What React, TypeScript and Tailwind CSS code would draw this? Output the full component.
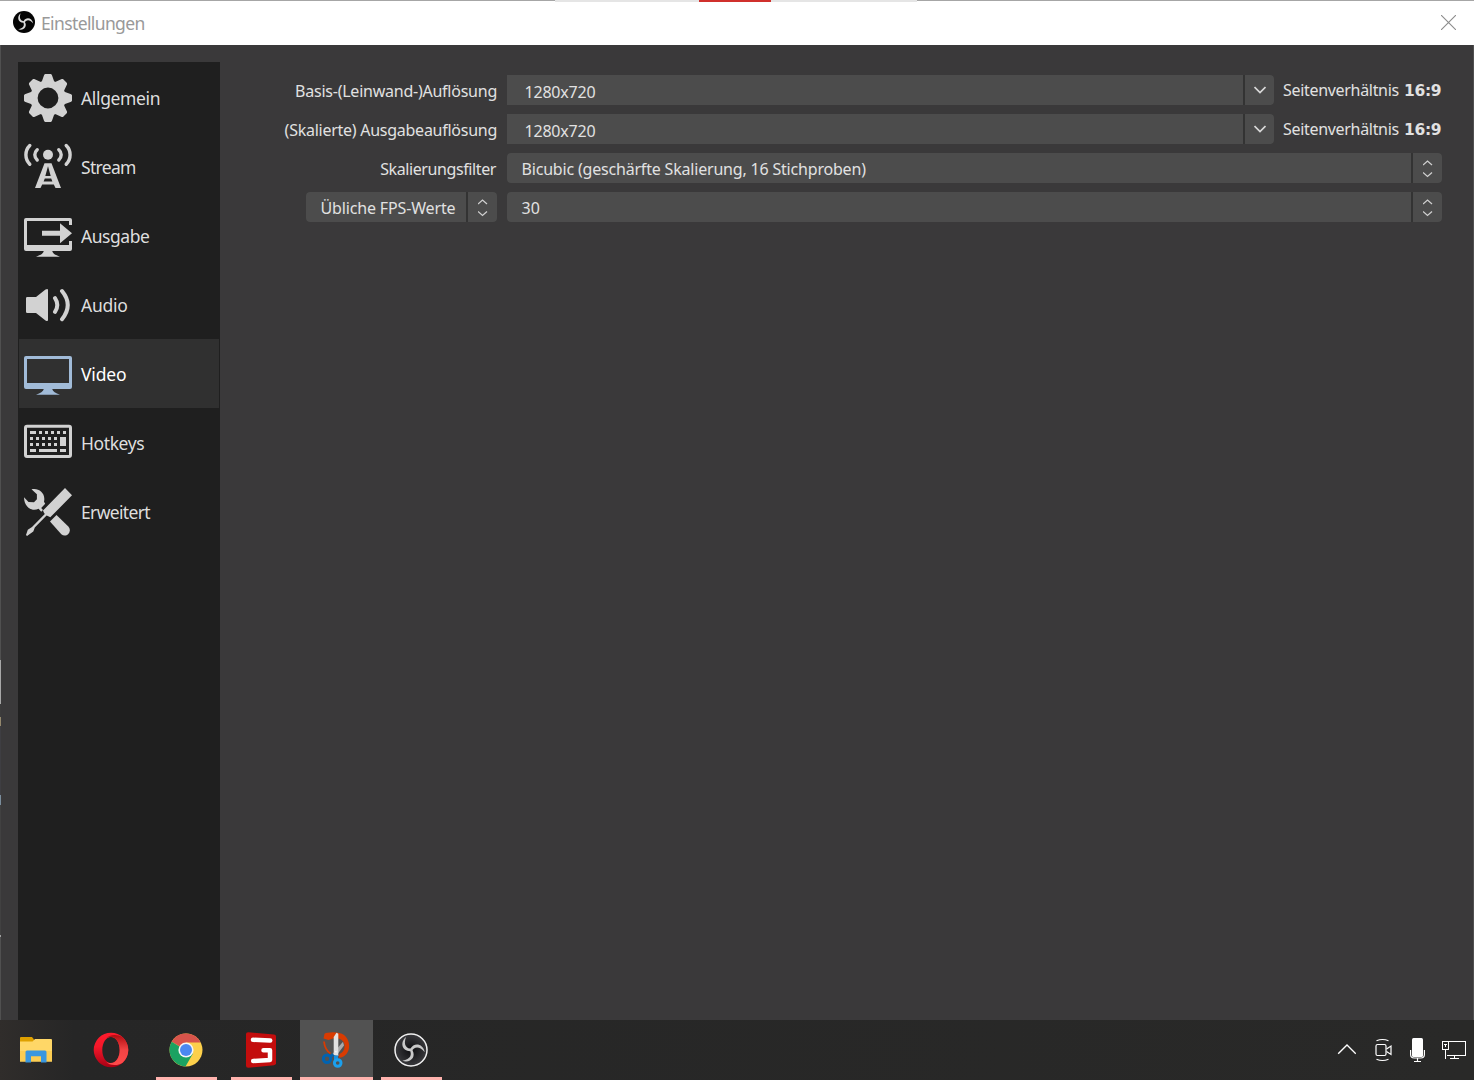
import React from "react";

const fg = "#d2d2d2";

function ObsSwirl({ color }: { color: string }) {
  const arm = "M-1.300 0C1 4 .2 8.800-8.300 10.300C-.5 13 5.200 6.500 1.300 0z";
  return (
    <g fill={color}>
      <path d={arm} />
      <path d={arm} transform="rotate(120)" />
      <path d={arm} transform="rotate(240)" />
    </g>
  );
}

function Icon({ children }: { children: React.ReactNode }) {
  return (
    <svg className="block h-12 w-12 shrink-0" viewBox="0 0 48 48" fill={fg}>
      {children}
    </svg>
  );
}

const gear = (
  <Icon>
    {[0, 45, 90, 135, 180, 225, 270, 315].map((a) => (
      <path key={a} d="M21.2 0h5.6l1 .8 2.2 6.2 2 3H16l2-3L20.200 .8z" transform={`rotate(${a} 24 24)`} />
    ))}
    <circle cx="24" cy="24" r="14" fill="none" stroke={fg} strokeWidth="7.200" />
  </Icon>
);

const stream = (
  <Icon>
    <circle cx="24" cy="11.800" r="5" />
    <g fill="none" stroke={fg} strokeWidth="3.400" strokeLinecap="round">
      <path d="M5.800 2.500C.6 7.500.6 16 5.800 21.200M42.200 2.500C47.400 7.500 47.400 16 42.200 21.200" />
      <path d="M13.200 6.700C10 9.500 10 14 13.200 17M34.800 6.700C38 9.500 38 14 34.800 17" />
    </g>
    <path
      fillRule="evenodd"
      d="M20.500 20.300h7L37 45h-5.500l-1.700-3.500H18.200L16.500 45H11zM24 23.300L21.300 33h5.400zM20.800 35.500L19.600 38.500H28.400L27.200 35.500z"
    />
  </Icon>
);

const outputIcon = (
  <Icon>
    <path d="M2 6h44a2 2 0 0 1 2 2v5h-3V9H3v24h42v-4h3v8a2 2 0 0 1-2 2H28.200c.6 2.800 3.300 4 7.800 5.700H12c4.500-1.700 7.200-2.900 7.800-5.700H2a2 2 0 0 1-2-2V8a2 2 0 0 1 2-2z" />
    <path d="M18 18.700h18v-7.500l12 10-12 10v-7.500H18z" />
  </Icon>
);

const audio = (
  <Icon>
    <path d="M3.300 16H12l9.500-7.500q2.500-1.300 2.500.5v30q0 1.800-2.500.500L12 32H3.300Q2 32 2 30.700V17.300Q2 16 3.300 16z" />
    <g fill="none" stroke={fg} strokeWidth="4" strokeLinecap="round">
      <path d="M31 17.200Q35.600 24 31 30.800M38 10Q49.500 24 38 38.200" />
    </g>
  </Icon>
);

const video = (
  <Icon>
    <path
      fill="#a1bbd8"
      fillRule="evenodd"
      d="M2 6h44a2 2 0 0 1 2 2v29a2 2 0 0 1-2 2H28.200c.6 2.800 3.300 4 7.800 5.700H12c4.500-1.700 7.200-2.900 7.800-5.700H2a2 2 0 0 1-2-2V8a2 2 0 0 1 2-2zM3 9v24h42V9z"
    />
  </Icon>
);

const hotkeys = (
  <Icon>
    <rect x="1.500" y="7.200" width="45" height="30.300" rx="1.500" fill="none" stroke={fg} strokeWidth="3" />
    <path d="M6 12h6v3H6zM15 12h3v3h-3zM21 12h3v3h-3zM27 12h3v3h-3zM33 12h3v3h-3zM39 12h3v3h-3z" />
    <path d="M6 18h3v3H6zM12 18h3v3h-3zM18 18h3v3h-3zM24 18h3v3h-3zM30 18h3v3h-3zM36 18h6v9h-6z" />
    <path d="M6 24h3v3H6zM12 24h3v3h-3zM18 24h3v3h-3zM24 24h3v3h-3zM30 24h3v3h-3z" />
    <path d="M6 30h6v3H6zM15 30h18v3H15zM36 30h6v3h-6z" />
  </Icon>
);

const advanced = (
  <Icon>
    <path d="M41 0l7 7.300-21.700 22-2.500-1.300-1.200-.6-11.800 12.100-1.500 4L3 48l-1-1L3.800 41.700 8 39 20.800 26l-1-1.500-.8-2z" />
    <path d="M26 33.500l6.500-6.500 11.800 11.500c4.500 5-2 12-7 7.800z" />
    <path d="M7.500 1.300C14.500-.5 22 5 20 13.700l1.200 2-4 4.300 1.800 2-1.800 1.800-2.600-3.100C8.500 24 .2 19.800 0 9.300l4.500 4.700 5.500.2 2.900-3V6.200z" />
  </Icon>
);

const items = [
  { label: "Allgemein", icon: gear, ls: "tracking-[-0.36px]" },
  { label: "Stream", icon: stream, ls: "tracking-[-0.68px]" },
  { label: "Ausgabe", icon: outputIcon, ls: "tracking-[-0.45px]" },
  { label: "Audio", icon: audio, ls: "tracking-[-0.25px]" },
  { label: "Video", icon: video, ls: "tracking-[-0.15px]" },
  { label: "Hotkeys", icon: hotkeys, ls: "tracking-[-0.4px]" },
  { label: "Erweitert", icon: advanced, ls: "tracking-[-0.66px]" },
];

function Sidebar() {
  return (
    <nav className="w-[202px] shrink-0 bg-[#1f1f1f] px-px pt-px">
      {items.map((it) => (
        <div
          key={it.label}
          className={`flex h-[69px] items-start pl-[5px] pt-[11px] text-[17.5px] ${
            it.label === "Video" ? "bg-[#303030] text-white" : "text-[#dedede]"
          }`}
        >
          {it.icon}
          <span className={`ml-[9px] leading-[48px] ${it.ls}`}>{it.label}</span>
        </div>
      ))}
    </nav>
  );
}

function DownButton() {
  return (
    <div className="flex w-[29px] shrink-0 items-center justify-center rounded-r-[4px] bg-[#4c4c4c]">
      <svg className="h-2 w-3" viewBox="0 0 12 8" fill="none" stroke="#d8d8d8" strokeWidth="1.700">
        <path d="M.5 1L6 6.500 11.500 1" />
      </svg>
    </div>
  );
}

function SpinButton() {
  return (
    <div className="flex w-[29px] shrink-0 items-center justify-center rounded-r-[4px] bg-[#4c4c4c]">
      <svg className="mt-[1px] h-[18px] w-[10px]" viewBox="0 0 10 18" fill="none" stroke="#d0d0d0" strokeWidth="1.300">
        <path d="M0 5L4.500 1 9 5M0 12.500L4.500 16.500 9 12.500" />
      </svg>
    </div>
  );
}

const split = "flex h-[30px] gap-[2px] bg-[#333333] rounded-r-[4px]";

function EditableCombo({ value }: { value: string }) {
  return (
    <div className={`${split} w-[767px]`}>
      <div className="flex-1 bg-[#4c4c4c] pl-[17.5px] leading-[34px] tracking-[-0.2px]">{value}</div>
      <DownButton />
    </div>
  );
}

function Combo({ value, width, ls }: { value: string; width: string; ls: string }) {
  return (
    <div className={`${split} rounded-l-[4px] ${width}`}>
      <div className={`flex-1 whitespace-nowrap rounded-l-[4px] bg-[#4c4c4c] pl-[14.5px] leading-[32px] ${ls}`}>{value}</div>
      <SpinButton />
    </div>
  );
}

function Ratio() {
  return (
    <div className="ml-[9px] flex whitespace-nowrap leading-[30px]">
      <span className="w-[121px] tracking-[-0.31px]">Seitenverhältnis</span>
      <b className="pt-px font-['DejaVu_Sans',sans-serif] text-[15.5px] tracking-[-0.3px]">16:9</b>
    </div>
  );
}

function Row({ label, ls, children }: { label: string; ls: string; children: React.ReactNode }) {
  return (
    <div className="flex h-[30px]">
      <div className={`mr-[10px] w-[277px] whitespace-nowrap text-right leading-[32px] ${ls}`}>{label}</div>
      {children}
    </div>
  );
}

function Form() {
  return (
    <main className="flex flex-1 flex-col gap-[9px] pt-[13px] text-[16px] text-[#e1e1e1]">
      <Row label="Basis-(Leinwand-)Auflösung" ls="tracking-[-0.24px]">
        <EditableCombo value="1280x720" />
        <Ratio />
      </Row>
      <Row label="(Skalierte) Ausgabeauflösung" ls="tracking-[-0.26px]">
        <EditableCombo value="1280x720" />
        <Ratio />
      </Row>
      <Row label="Skalierungsfilter" ls="tracking-[-0.4px] pr-px">
        <Combo value="Bicubic (geschärfte Skalierung, 16 Stichproben)" width="w-[935px]" ls="tracking-[-0.19px]" />
      </Row>
      <div className="flex pl-[86px]">
        <Combo value="Übliche FPS-Werte" width="w-[191px]" ls="tracking-[-0.15px]" />
        <div className="w-[10px]" />
        <Combo value="30" width="w-[935px]" ls="tracking-[0px]" />
      </div>
    </main>
  );
}

function TitleBar() {
  return (
    <header className="h-[45px] bg-white">
      <div className="flex h-[2px] items-start">
        <div className="h-px w-[555px] bg-[#a6a6a6]" />
        <div className="h-[2px] w-[144px] bg-[#e5e5e5]" />
        <div className="h-[2px] w-[72px] bg-[#d0302c]" />
        <div className="h-[2px] w-[146px] bg-[#e5e5e5]" />
        <div className="h-px flex-1 bg-[#a6a6a6]" />
      </div>
      <div className="flex h-[43px] items-start">
        <svg className="ml-[13px] mt-[9px] h-[22px] w-[22px]" viewBox="-18 -18 36 36">
          <circle r="18" fill="#050505" />
          <g transform="scale(1.150)">
            <ObsSwirl color="#dcdcdc" />
          </g>
        </svg>
        <h1 className="ml-[6px] text-[17.5px] leading-[43px] tracking-[-0.62px] text-[#999999]">Einstellungen</h1>
        <svg className="ml-auto mr-[18px] mt-[13px] h-[15px] w-[15px]" viewBox="0 0 15 15" stroke="#8c8c8c" strokeWidth="1.100">
          <path d="M0 0L15 15M15 0L0 15" />
        </svg>
      </div>
    </header>
  );
}

const explorer = (
  <svg className="h-9 w-9" viewBox="0 -1 36 36">
    <path d="M2 5q0-1 1-1h11l2 2.500V9H2z" fill="#dea000" />
    <path d="M2 8.500h12.500L17 6h16q1 0 1 1v21.500H2z" fill="#ffd767" />
    <path d="M2 18h32v10.500H2z" fill="#fccd52" />
    <path d="M7.500 29.500V19q0-1.500 1.500-1.500h18q1.500 0 1.500 1.500v10.500h-5.500V23.300H13v6.200z" fill="#3a97df" />
  </svg>
);

const opera = (
  <svg className="h-9 w-9" viewBox="0 0 36 36">
    <defs>
      <linearGradient id="operaL" x1="0" y1="0" x2="0" y2="1">
        <stop offset="0" stopColor="#ff1b2d" />
        <stop offset=".4" stopColor="#f5182a" />
        <stop offset="1" stopColor="#a70014" />
      </linearGradient>
      <linearGradient id="operaR" x1="0" y1="0" x2="0" y2="1">
        <stop offset="0" stopColor="#b00c10" />
        <stop offset=".5" stopColor="#f04444" />
        <stop offset="1" stopColor="#ff4b4b" />
      </linearGradient>
    </defs>
    <path fillRule="evenodd" fill="url(#operaL)" d="M18 .7a17.300 17.300 0 1 0 0 34.600A17.300 17.300 0 1 0 18 .7zM18 5c5 0 8.700 5.800 8.700 13S23 31 18 31 9.300 25.200 9.300 18 13 5 18 5z" />
    <path
      fill="url(#operaR)"
      d="M13 6.500C16 2.500 24 1.500 29.600 5.200A17.300 17.300 0 0 1 29.600 30.800C24 34.500 16 33.500 13 29.500C14.500 30.500 16 31 18 31c5 0 8.700-5.800 8.700-13S23 5 18 5c-2 0-3.500.5-5 1.500z"
    />
  </svg>
);

const chrome = (
  <svg className="h-9 w-9" viewBox="0 0 36 36">
    <circle cx="18" cy="18" r="16.500" fill="#fdd04b" />
    <path d="M18 18L3.700 9.700A16.500 16.500 0 0 1 32.600 10.500H18z" fill="#d8544b" />
    <path d="M18 18L10.700 14 3.700 9.700A16.500 16.500 0 0 0 17.500 34.500L25 21.500z" fill="#1ba261" />
    <circle cx="18" cy="18" r="7.600" fill="#f5f5f5" />
    <circle cx="18" cy="18" r="6" fill="#4a88f0" />
  </svg>
);

const redApp = (
  <svg className="h-9 w-9" viewBox="0 0 36 36">
    <path d="M5.500.2L31 2.500q2 .2 2 2v26.700q0 1.700-2 2L5.500 35.800Q3 36 3 33.700V2Q3 0 5.500.2z" fill="#c30d0d" />
    <path d="M10 7.800L27.200 8.600M20.500 18.200H27V28L10.200 29" stroke="#fff" strokeWidth="4.500" fill="none" strokeLinecap="round" strokeLinejoin="round" />
  </svg>
);

const snip = (
  <svg className="h-9 w-9" viewBox="-.5 0 36 36">
    <path d="M12 21.500C6.500 18 5.800 12.500 5.500 9.500" fill="none" stroke="#d83b01" strokeWidth="1.800" />
    <path d="M6 1.800Q9-.2 18 .4C27 .8 31.500 8 30.500 16c-1 6.500-6 10-10.500 9.500l1-3.500c3.500-1.500 5.500-5 5-9C25.500 8 20 5.500 16 6L10 8 5 6.500z" fill="#d83b01" />
    <path d="M24.500 9.800l1 3.800L18 23.500l-4.500-1z" fill="#a9a9a9" />
    <path d="M15.200 5L18 .8l1.800 1V24l-4.600-1z" fill="#e2e2e2" />
    <g fill="none" strokeWidth="3">
      <path d="M15 22.500L12 24.500" stroke="#0063b1" />
      <circle cx="8.500" cy="26.800" r="3.700" stroke="#0063b1" />
      <path d="M17.500 23.500v5" stroke="#1890e0" strokeWidth="4" />
      <circle cx="19.200" cy="31" r="3.300" stroke="#1ba0ee" />
    </g>
    <circle cx="17.400" cy="19.700" r=".8" fill="#fff" />
  </svg>
);

const obs = (
  <svg className="h-9 w-9" viewBox="-18 -18 36 36">
    <defs>
      <radialGradient id="obsFill">
        <stop offset="0" stopColor="#0d0d10" />
        <stop offset="1" stopColor="#39393c" />
      </radialGradient>
    </defs>
    <circle r="16" fill="url(#obsFill)" stroke="#f0f0f0" strokeWidth="1.500" />
    <g transform="scale(1.050)">
      <ObsSwirl color="#c9c9c9" />
    </g>
  </svg>
);

const tasks = [
  { id: "explorer", icon: explorer, state: "idle" },
  { id: "opera", icon: opera, state: "idle" },
  { id: "chrome", icon: chrome, state: "open" },
  { id: "red", icon: redApp, state: "open" },
  { id: "snip", icon: snip, state: "active" },
  { id: "obs", icon: obs, state: "open" },
];

function Taskbar() {
  return (
    <footer className="flex h-[60px] justify-between bg-[#272727] bg-linear-to-r from-[#302d2b] from-0% via-[#262626] via-5% to-[#292928]">
      <div className="flex gap-[2px]">
        {tasks.map((t) => (
          <div key={t.id} className={`flex w-[73px] flex-col items-center justify-between ${t.state === "active" ? "bg-[#525252]" : ""}`}>
            <div className="flex h-[57px] items-center pr-px pt-[2px]">{t.icon}</div>
            <div className={`h-[3px] ${t.state === "active" ? "w-full bg-[#ffb3ae]" : t.state === "open" ? "w-[61px] bg-[#ffb3ae]" : "w-0"}`} />
          </div>
        ))}
      </div>
      <div className="flex items-start pr-[7px] pt-[17px]">
        <svg className="mr-[19px] h-[26px] w-5" viewBox="0 0 20 26" fill="none" stroke="#fff" strokeWidth="1.400">
          <path d="M2.200 16.800L11 8l8.800 8.800" />
        </svg>
        <svg className="mr-[17px] h-[26px] w-[18px]" viewBox="0 0 18 26" fill="none" stroke="#fff" strokeWidth="1.200">
          <rect x="1" y="7.500" width="10" height="11" rx="1.500" />
          <path d="M11.500 12l4.500-3v8.500L11.500 14.500M1.500 3.800Q7.500 1.200 13.500 3.800M1.500 22.200Q7.500 24.800 13.500 22.200" />
        </svg>
        <svg className="mr-[16px] h-[26px] w-4" viewBox="0 0 16 26" fill="none" stroke="#fff" strokeWidth="1.200">
          <rect x="2" y="1" width="11" height="19" rx="1.500" fill="#fff" stroke="none" />
          <path d="M.6 13v4.500q0 3.500 3.500 3.500h6.800q3.500 0 3.500-3.500V13M7.500 21v3.500M4 24.500h7" />
        </svg>
        <svg className="h-[26px] w-[25px]" viewBox="0 0 25 26" fill="none" stroke="#fff" strokeWidth="1.100" shapeRendering="crispEdges">
          <path d="M7 4.500h16.500v14H4.500M.5 4.500h6v8h-6zM3.500 12.500v9M2 7.500h3M3.500 7.500v2M12.500 18.500v3M8 21.500h9" />
        </svg>
      </div>
    </footer>
  );
}

function LeftEdge() {
  return (
    <div className="flex w-px flex-col bg-[#505050]">
      <div className="h-[615px]" />
      <div className="h-[44px] bg-[#a8a8a8]" />
      <div className="h-[13px] bg-[#3c3c3c]" />
      <div className="h-[9px] bg-[#94886d]" />
      <div className="h-[69px] bg-[#3e3e42]" />
      <div className="h-[10px] bg-[#7a8d9c]" />
      <div className="h-[130px] bg-[#414141]" />
      <div className="h-[2px] bg-[#a0a0a0]" />
    </div>
  );
}

export default function App() {
  return (
    <div className="flex h-[1080px] w-[1474px] flex-col overflow-hidden bg-[#3a393a] font-['Noto_Sans','Open_Sans',sans-serif]">
      <TitleBar />
      <div className="flex min-h-0 flex-1">
        <LeftEdge />
        <div className="flex flex-1 pl-[17px] pt-[17px]">
          <Sidebar />
          <Form />
        </div>
        <div className="w-px bg-[#505050]" />
      </div>
      <Taskbar />
    </div>
  );
}
